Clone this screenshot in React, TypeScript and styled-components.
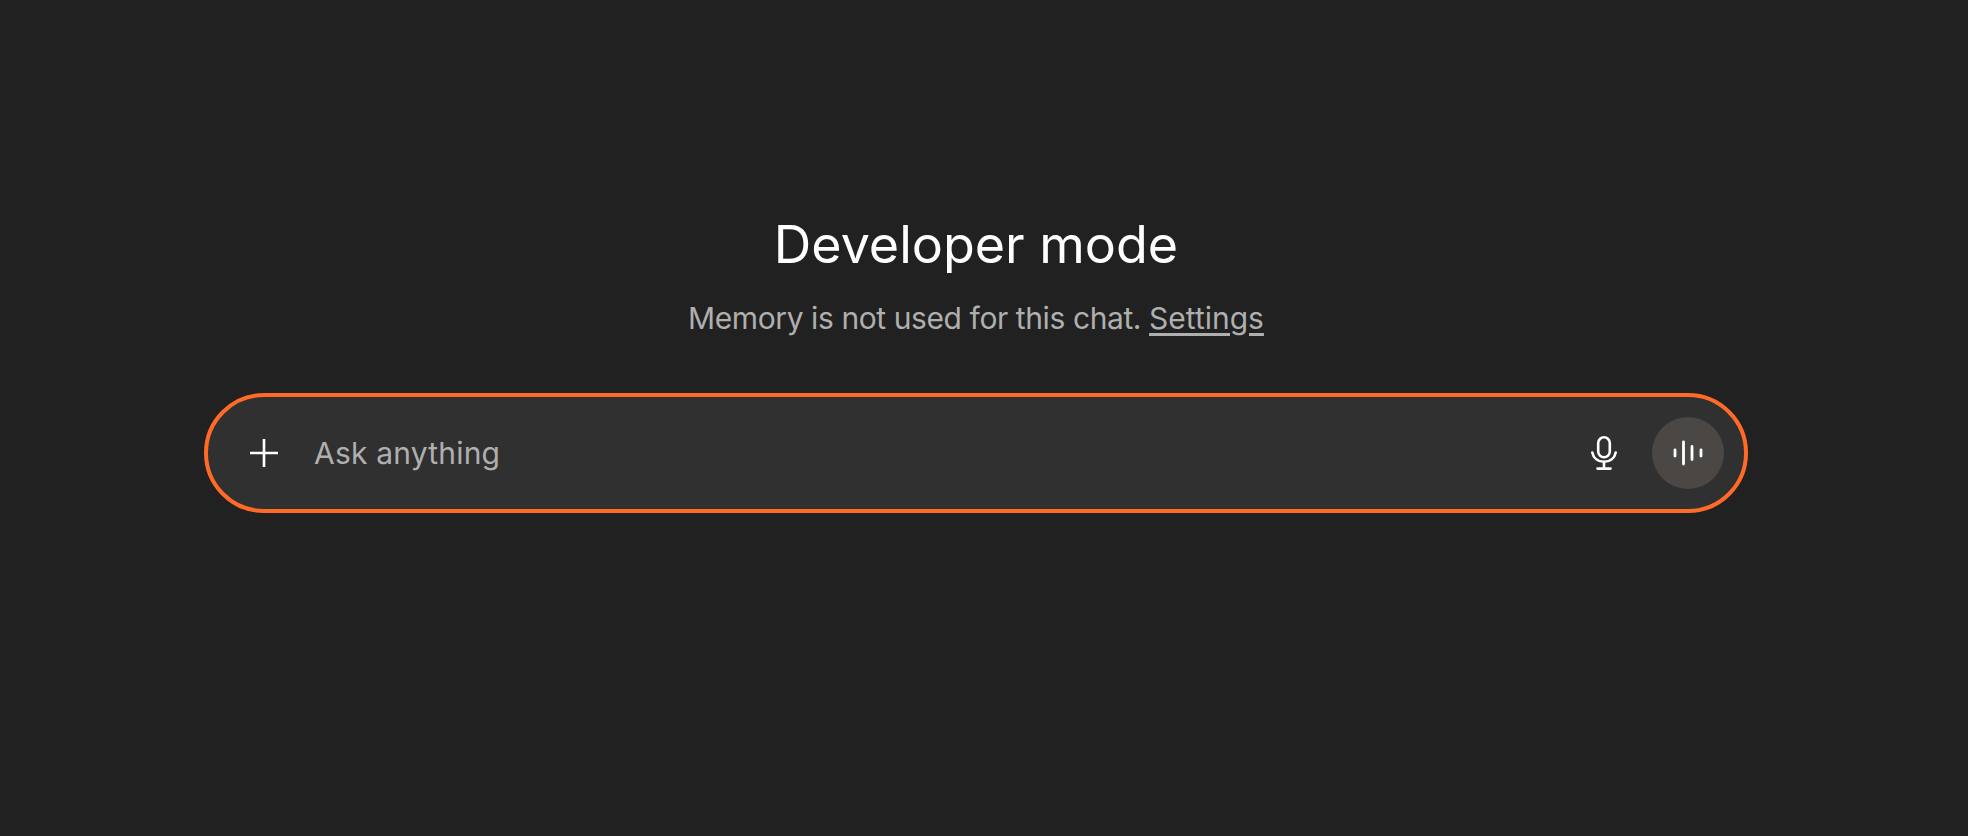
import React from "react";
import styled, { createGlobalStyle } from "styled-components";

const GlobalStyle = createGlobalStyle`
  html, body {
    margin: 0;
    padding: 0;
    height: 100%;
    background: #212121;
  }
  #root {
    height: 100%;
  }
`;

const Page = styled.main`
  box-sizing: border-box;
  width: 1968px;
  height: 836px;
  padding: 212px 220px 0 204px;
  display: flex;
  flex-direction: column;
  align-items: center;
  background: #212121;
  font-family: Inter, "Liberation Sans", sans-serif;
  overflow: hidden;
`;

const Title = styled.h1`
  margin: 0;
  font-size: 52px;
  line-height: 66px;
  font-weight: 400;
  color: #ffffff;
`;

const Subtitle = styled.p`
  margin: 20px 0 0;
  font-size: 30px;
  line-height: 40px;
  letter-spacing: -0.41px;
  color: #afafaf;
`;

const SettingsLink = styled.a`
  color: #afafaf;
  letter-spacing: 0;
  text-decoration: underline;
  text-decoration-thickness: 2.5px;
  text-underline-offset: 4px;
  cursor: pointer;
`;

const Composer = styled.form`
  box-sizing: border-box;
  width: 1544px;
  height: 120px;
  margin-top: 55px;
  padding: 0 20px 0 28px;
  display: flex;
  align-items: center;
  flex-shrink: 0;
  background: #303030;
  border: 4px solid #ff6b26;
  border-radius: 60px;
`;

const PlusButton = styled.button`
  width: 56px;
  height: 56px;
  padding: 0;
  display: flex;
  align-items: center;
  justify-content: center;
  flex-shrink: 0;
  background: none;
  border: none;
  color: #ffffff;
`;

const Prompt = styled.input`
  flex: 1;
  min-width: 0;
  margin-left: 22px;
  padding: 0;
  background: none;
  border: none;
  outline: none;
  font: inherit;
  font-size: 30px;
  letter-spacing: 0.2px;
  color: #ffffff;

  &::placeholder {
    color: #afafaf;
    opacity: 1;
  }
`;

const MicButton = styled.button`
  width: 56px;
  height: 56px;
  padding: 0;
  margin-right: 20px;
  display: flex;
  align-items: center;
  justify-content: center;
  flex-shrink: 0;
  background: none;
  border: none;
  color: #ffffff;
`;

const VoiceButton = styled.button`
  width: 72px;
  height: 72px;
  padding: 0;
  display: flex;
  align-items: center;
  justify-content: center;
  flex-shrink: 0;
  background: #4a4745;
  border: none;
  border-radius: 50%;
  color: #ffffff;
`;

const App: React.FC = () => {
  return (
    <Page>
      <GlobalStyle />
      <Title>Developer mode</Title>
      <Subtitle>
        Memory is not used for this chat. <SettingsLink>Settings</SettingsLink>
      </Subtitle>
      <Composer>
        <PlusButton type="button" aria-label="Add">
          <svg width="28" height="28" viewBox="0 0 28 28" fill="none" stroke="currentColor" strokeWidth="2.6">
            <path d="M14 0v28M0 14h28" />
          </svg>
        </PlusButton>
        <Prompt placeholder="Ask anything" />
        <MicButton type="button" aria-label="Dictate">
          <svg width="26" height="34" viewBox="0 0 26 34" fill="none" stroke="currentColor" strokeWidth="2.6" strokeLinecap="round">
            <rect x="7.2" y="1.3" width="11.6" height="20" rx="5.8" />
            <path d="M1.3 16.5c1 5.6 5.6 9.3 11.7 9.3s10.7-3.7 11.7-9.3" />
            <path d="M13 26v6.5M6.5 32.6h13" />
          </svg>
        </MicButton>
        <VoiceButton type="button" aria-label="Voice mode">
          <svg width="30" height="26" viewBox="0 0 30 26" fill="none" stroke="currentColor" strokeWidth="2.8" strokeLinecap="round">
            <path d="M2 10v6M10.5 2v22M19 6.5v13M28 10v6" />
          </svg>
        </VoiceButton>
      </Composer>
    </Page>
  );
};

export default App;
